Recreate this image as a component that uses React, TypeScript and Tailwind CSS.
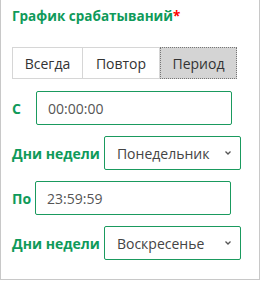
import React from 'react';

const green = 'text-[#0f9a5a]';

const Chevron: React.FC = () => (
  <svg width="8" height="8" viewBox="0 0 8 8" className="text-[#555]">
    <path d="M1.5 2.5 L4 5 L6.5 2.5" fill="none" stroke="currentColor" strokeWidth="1.3" />
  </svg>
);

const SelectBox: React.FC<{ value: string }> = ({ value }) => (
  <div className="w-[137px] h-[34px] border border-[#1a9a5e] rounded-[2px] flex items-center justify-between pl-[12px] pr-[8px] text-[14px] text-[#444]">
    <span>{value}</span>
    <Chevron />
  </div>
);

const TimeInput: React.FC<{ value: string }> = ({ value }) => (
  <div className="w-[196px] h-[34px] border border-[#1a9a5e] rounded-[2px] flex items-center pl-[11px] text-[14px] text-[#555]">
    {value}
  </div>
);

export default function App() {
  return (
    <div className="w-[260px] h-[280px] border-x border-b border-[#c8c8c8] bg-white px-[11px] pt-[6px] font-['Open_Sans',sans-serif]">
      <div className={`text-[13.5px] font-bold ${green} leading-[20px]`}>
        График срабатываний<span className="text-[#ff0000]">*</span>
      </div>
      <div className="mt-[21px] flex w-[225px] h-[32px] text-[14px] text-[#333]">
        <div className="w-[71px] border border-[#d6d6d6] flex items-center justify-center">Всегда</div>
        <div className="w-[77px] border-y border-r border-[#d6d6d6] flex items-center justify-center">Повтор</div>
        <div className="flex-1 border border-dotted border-[#777] bg-[#d4d4d4] flex items-center justify-center">Период</div>
      </div>
      <div className="mt-[12px] flex items-center gap-[12px]">
        <span className={`w-[12px] text-[14px] font-bold ${green}`}>С</span>
        <TimeInput value="00:00:00" />
      </div>
      <div className="mt-[11px] flex items-center gap-[4px]">
        <span className={`text-[14px] font-bold ${green}`}>Дни недели</span>
        <SelectBox value="Понедельник" />
      </div>
      <div className="mt-[11px] flex items-center gap-[4px]">
        <span className={`w-[19px] text-[14px] font-bold ${green}`}>По</span>
        <TimeInput value="23:59:59" />
      </div>
      <div className="mt-[11px] flex items-center gap-[4px]">
        <span className={`text-[14px] font-bold ${green}`}>Дни недели</span>
        <SelectBox value="Воскресенье" />
      </div>
    </div>
  );
}
